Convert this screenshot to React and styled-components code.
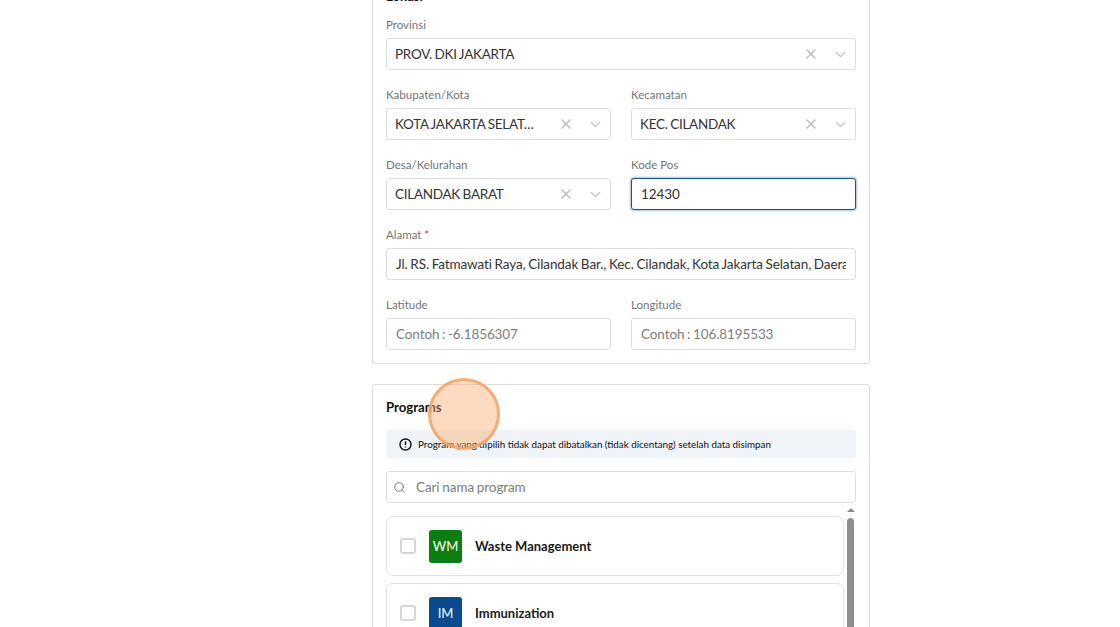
import React from "react";
import styled, { createGlobalStyle } from "styled-components";
import { X, ChevronDown, Search } from "lucide-react";

const Global = createGlobalStyle`
  html, body { margin: 0; padding: 0; background: #fff; height: 100%; overflow: hidden; }
  body { font-family: Lato, "Liberation Sans", sans-serif; color: #333; }
  * { box-sizing: border-box; }
`;

const Page = styled.div`
  position: relative;
  width: 1120px;
  height: 627px;
  overflow: hidden;
`;
const Column = styled.main`
  width: 498px;
  margin: -27px 0 0 372px;
  display: flex;
  flex-direction: column;
  gap: 20px;
`;
const Card = styled.section`
  border: 1px solid #dcdcdc;
  border-radius: 3px;
  padding: 13px;
  display: flex;
  flex-direction: column;
`;
const CardTitle = styled.h2`
  margin: 0 0 ${(p) => p.$gap}px;
  font-size: 13.2px;
  line-height: 18px;
  font-weight: 700;
  color: #111;
`;
const Rows = styled.div`
  display: flex;
  flex-direction: column;
  gap: 16px;
`;
const Row = styled.div`
  display: grid;
  grid-template-columns: ${(p) => (p.$cols === 2 ? "225px 225px" : "470px")};
  column-gap: 20px;
`;
const Field = styled.div`
  display: flex;
  flex-direction: column;
  gap: 4px;
  min-width: 0;
`;
const Label = styled.label`
  font-size: 11.5px;
  line-height: 18px;
  color: #757575;
`;
const Required = styled.span`
  color: #d9363e;
`;
const SelectBox = styled.div`
  height: 32px;
  display: flex;
  align-items: center;
  border: 1px solid #dedede;
  border-radius: 3px;
  padding: 0 6px 0 8px;
  font-size: 13.5px;
  letter-spacing: -0.28px;
  word-spacing: -0.6px;
  color: #333;
  background: #fff;
`;
const SelectValue = styled.span`
  flex: 1;
  min-width: 0;
  white-space: nowrap;
  overflow: hidden;
  text-overflow: ellipsis;
`;
const SelectIcons = styled.span`
  display: flex;
  align-items: center;
  gap: 13px;
  color: #bdbdbd;
  flex: none;
  margin-left: 20px;
`;
const Input = styled.div`
  height: 32px;
  display: flex;
  align-items: center;
  border: 1px solid ${(p) => (p.$focus ? "#24527f" : "#dedede")};
  border-radius: 3px;
  padding: 0 9px;
  font-size: 13.5px;
  letter-spacing: -0.1px;
  word-spacing: -0.7px;
  white-space: nowrap;
  overflow: hidden;
  background: #fff;
  color: ${(p) => (p.$placeholder ? "#7d7d7d" : "#333")};
  box-shadow: ${(p) => (p.$focus ? "0 0 2px 1px rgba(70,120,170,.45)" : "none")};
`;
const Clip = styled.span`
  display: block;
  overflow: hidden;
  width: 100%;
`;
const Alert = styled.div`
  height: 28px;
  background: #f0f4f8;
  border-radius: 3px;
  display: flex;
  align-items: center;
  gap: 6px;
  padding: 0 13px;
  font-size: 9.8px;
  color: #111;
  margin-bottom: 13px;
`;
const SearchBox = styled.div`
  height: 32px;
  border: 1px solid #dedede;
  border-radius: 3px;
  display: flex;
  align-items: center;
  gap: 10px;
  padding: 0 6px;
  font-size: 13.5px;
  letter-spacing: -0.1px;
  word-spacing: -0.5px;
  color: #7d7d7d;
  margin-bottom: 13px;
`;
const ListWrap = styled.div`
  display: flex;
  gap: 3px;
`;
const List = styled.div`
  flex: 1;
  display: flex;
  flex-direction: column;
  gap: 7px;
`;
const Item = styled.div`
  height: 60px;
  border: 1px solid #e2e2e2;
  border-radius: 7px;
  display: flex;
  align-items: center;
  padding: 0 13px;
  flex: none;
`;
const Check = styled.span`
  width: 16px;
  height: 16px;
  border: 2px solid #d6d6d6;
  border-radius: 3px;
  margin-right: 13px;
  flex: none;
`;
const Badge = styled.span`
  width: 33px;
  height: 33px;
  border-radius: 3px;
  background: ${(p) => p.$bg};
  color: #fff;
  font-size: 13px;
  display: flex;
  align-items: center;
  justify-content: center;
  margin-right: 13px;
  flex: none;
`;
const ItemName = styled.span`
  font-size: 13px;
  font-weight: 700;
  color: #1a1a1a;
`;
const Scrollbar = styled.div`
  width: 7px;
  margin: -8px 2px 0 0;
  display: flex;
  flex-direction: column;
  align-items: center;
  gap: 6px;
  flex: none;
`;
const ScrollArrow = styled.span`
  width: 0;
  height: 0;
  border-left: 4px solid transparent;
  border-right: 4px solid transparent;
  border-bottom: 4px solid #8a8a8a;
`;
const ScrollThumb = styled.span`
  width: 7px;
  height: 200px;
  background: #8f8f8f;
  border-radius: 4px;
`;
const Cursor = styled.div`
  position: absolute;
  left: 428px;
  top: 378px;
  width: 72px;
  height: 72px;
  border-radius: 50%;
  background: rgba(250, 170, 105, 0.42);
  border: 3px solid rgba(243, 165, 100, 0.85);
`;

const Select = ({ value }) => (
  <SelectBox>
    <SelectValue>{value}</SelectValue>
    <SelectIcons>
      <X size={16} strokeWidth={2.3} />
      <ChevronDown size={17} strokeWidth={1.8} />
    </SelectIcons>
  </SelectBox>
);

const AlertIcon = () => (
  <svg width="13" height="13" viewBox="0 0 13 13" fill="none" stroke="#111" strokeWidth="1.4">
    <circle cx="6.5" cy="6.5" r="5.5" />
    <path d="M6.5 3.3v3.8M6.5 8.4v1.2" />
  </svg>
);

export default function App() {
  return (
    <Page>
      <Global />
      <Column>
        <Card>
          <CardTitle $gap={11}>Lokasi</CardTitle>
          <Rows>
            <Row>
              <Field>
                <Label>Provinsi</Label>
                <Select value="PROV. DKI JAKARTA" />
              </Field>
            </Row>
            <Row $cols={2}>
              <Field>
                <Label>Kabupaten/Kota</Label>
                <Select value="KOTA JAKARTA SELATAN" />
              </Field>
              <Field>
                <Label>Kecamatan</Label>
                <Select value="KEC. CILANDAK" />
              </Field>
            </Row>
            <Row $cols={2}>
              <Field>
                <Label>Desa/Kelurahan</Label>
                <Select value="CILANDAK BARAT" />
              </Field>
              <Field>
                <Label>Kode Pos</Label>
                <Input $focus>12430</Input>
              </Field>
            </Row>
            <Row>
              <Field>
                <Label>
                  Alamat <Required>*</Required>
                </Label>
                <Input>
                  <Clip>Jl. RS. Fatmawati Raya, Cilandak Bar., Kec. Cilandak, Kota Jakarta Selatan, Daerah Khusus Ibukota Jakarta</Clip>
                </Input>
              </Field>
            </Row>
            <Row $cols={2}>
              <Field>
                <Label>Latitude</Label>
                <Input $placeholder>Contoh : -6.1856307</Input>
              </Field>
              <Field>
                <Label>Longitude</Label>
                <Input $placeholder>Contoh : 106.8195533</Input>
              </Field>
            </Row>
          </Rows>
        </Card>
        <Card>
          <CardTitle $gap={14}>Programs</CardTitle>
          <Alert>
            <AlertIcon />
            Program yang dipilih tidak dapat dibatalkan (tidak dicentang) setelah data disimpan
          </Alert>
          <SearchBox>
            <Search size={13} strokeWidth={1.5} color="#666" />
            Cari nama program
          </SearchBox>
          <ListWrap>
            <List>
              <Item>
                <Check />
                <Badge $bg="#0c7e10">WM</Badge>
                <ItemName>Waste Management</ItemName>
              </Item>
              <Item>
                <Check />
                <Badge $bg="#0a4a8f">IM</Badge>
                <ItemName>Immunization</ItemName>
              </Item>
            </List>
            <Scrollbar>
              <ScrollArrow />
              <ScrollThumb />
            </Scrollbar>
          </ListWrap>
        </Card>
      </Column>
      <Cursor />
    </Page>
  );
}
